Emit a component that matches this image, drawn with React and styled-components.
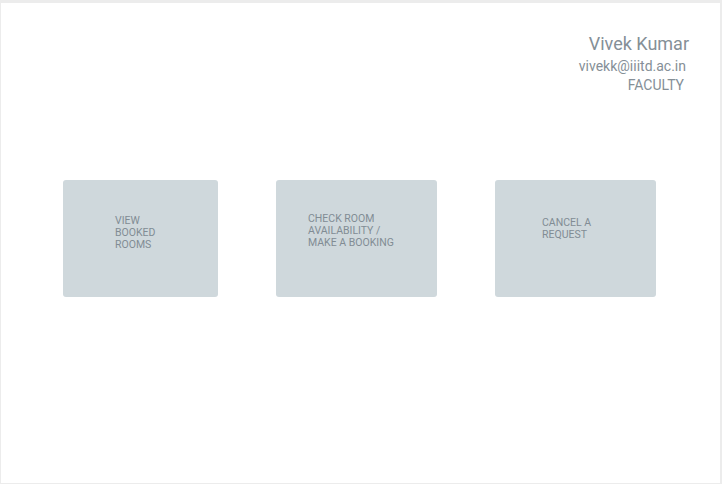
import React from "react";
import styled, { createGlobalStyle } from "styled-components";

const GlobalStyle = createGlobalStyle`
	html, body {
		margin: 0;
		padding: 0;
		background: #ececec;
	}
	body {
		font-family: Roboto, "Liberation Sans", sans-serif;
	}
`;

const Frame = styled.div`
	box-sizing: border-box;
	width: 722px;
	height: 484px;
	padding: 3px 2px 1px 1px;
	background: #ececec;
`;

const Panel = styled.div`
	height: 100%;
	background: #fff;
	display: flex;
	flex-direction: column;
`;

const Profile = styled.div`
	display: flex;
	flex-direction: column;
	align-items: flex-end;
	padding-top: 30px;
	padding-right: 31px;
	color: #858f97;
`;

const Line = styled.div`
	font-size: ${(p) => p.size}px;
	line-height: ${(p) => p.lh}px;
	margin-top: ${(p) => p.gap || 0}px;
	margin-right: ${(p) => p.inset || 0}px;
`;

const Tiles = styled.div`
	display: flex;
	gap: 58px;
	margin-top: 87px;
	padding-left: 62px;
`;

const Tile = styled.div`
	box-sizing: border-box;
	width: ${(p) => p.w}px;
	height: 117px;
	background: #cfd8dc;
	border-radius: 3px;
	padding: ${(p) => p.top}px 0 0 ${(p) => p.left}px;
	color: #818c94;
	font-size: 10.5px;
	line-height: 12px;
	text-transform: uppercase;
	cursor: pointer;
`;

const tiles = [
	{ w: 155, top: 35, left: 52, lines: ["View", "Booked", "Rooms"] },
	{ w: 161, top: 33, left: 32, lines: ["Check room", "availability /", "make a booking"] },
	{ w: 161, top: 37, left: 47, lines: ["Cancel a", "request"] },
];

function App() {
	return (
		<Frame>
			<GlobalStyle />
			<Panel>
				<Profile>
					<Line size={18} lh={22}>Vivek Kumar</Line>
					<Line size={14} lh={21} gap={1} inset={3}>vivekk@iiitd.ac.in</Line>
					<Line size={14} lh={16} inset={5}>FACULTY</Line>
				</Profile>
				<Tiles>
					{tiles.map((t, i) => (
						<Tile key={i} w={t.w} top={t.top} left={t.left}>
							{t.lines.map((l) => (
								<div key={l}>{l}</div>
							))}
						</Tile>
					))}
				</Tiles>
			</Panel>
		</Frame>
	);
}

export default App;
